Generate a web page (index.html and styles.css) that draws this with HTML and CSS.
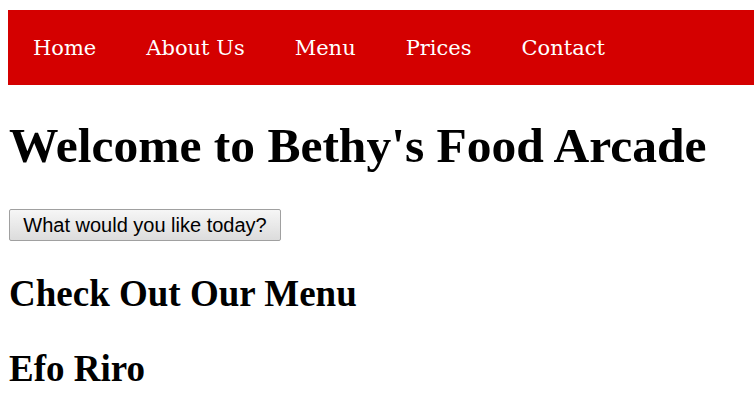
FILE: index.html
```html
<!DOCTYPE html>
<html>
<head>
<meta charset="utf-8">
<link rel="stylesheet" href="styles.css">
</head>
<body>
<nav class="nav">
  <ul class="nav-list">
    <li class="nav-item"><a href="#">Home</a></li>
    <li class="nav-item"><a href="#">About Us</a></li>
    <li class="nav-item"><a href="#">Menu</a></li>
    <li class="nav-item"><a href="#">Prices</a></li>
    <li class="nav-item"><a href="#">Contact</a></li>
  </ul>
</nav>
<h1 class="title">Welcome to Bethy's Food Arcade</h1>
<button class="btn">What would you like today?</button>
<h2 class="heading heading-first">Check Out Our Menu</h2>
<h2 class="heading">Efo Riro</h2>
</body>
</html>
```
FILE: styles.css
```css
html {
  background: #fff;
}
body {
  margin: 10px 1px 0 8px;
  font-family: "Liberation Serif", "Times New Roman", serif;
  color: #000;
}
.nav {
  background: #d40000;
  height: 75px;
  display: flex;
  align-items: center;
}
.nav-list {
  list-style: none;
  margin: 0;
  padding: 0;
  display: flex;
}
.nav-item a {
  display: block;
  padding: 0 25px;
  color: #fff;
  text-decoration: none;
  font-family: "DejaVu Serif", serif;
  font-size: 21px;
  line-height: 24px;
}
.title {
  font-size: 49.5px;
  font-weight: bold;
  margin: 33px 0 0 1px;
  line-height: 56px;
}
.btn {
  margin: 35px 0 0 1px;
  width: 272px;
  height: 32px;
  font-family: "Liberation Sans", Arial, sans-serif;
  font-size: 20px;
  color: #000;
  background: linear-gradient(#f6f6f6, #dcdcdc);
  border: 1px solid #a0a0a0;
  border-radius: 2px;
  padding: 0;
}
.heading {
  font-size: 37px;
  font-weight: bold;
  margin: 33px 0 0 1px;
  line-height: 42px;
}
.heading-first {
  margin-top: 32px;
}
```
